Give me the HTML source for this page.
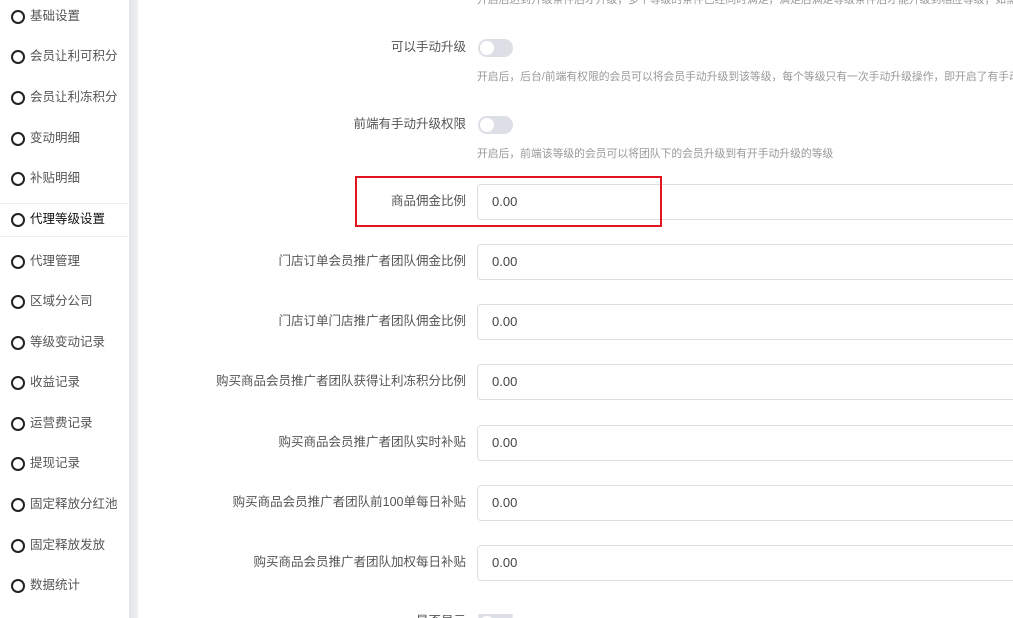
<!DOCTYPE html>
<html style="overflow:hidden;width:1013px;height:618px"><head><meta charset="utf-8"><style>
*{margin:0;padding:0;box-sizing:border-box}
body{width:1013px;height:618px;overflow:hidden;background:#fff;font-family:"Liberation Sans","Noto Sans CJK SC",sans-serif;position:relative}
.sb{position:absolute;left:0;top:0;width:129px;height:618px;background:#fff}
.gap{position:absolute;left:129px;top:0;width:9px;height:618px;background:linear-gradient(to right,#e2e4e8,#eef0f3)}
.it{position:absolute;left:0;width:129px;height:20px;font-size:12.5px;color:#555;line-height:20px;padding-left:30px;white-space:nowrap;margin-top:1px}
.it:before{content:"";position:absolute;left:11px;top:4px;width:10px;height:10px;border:2px solid #222;border-radius:50%}
.act{color:#111}
.hl{position:absolute;left:0;width:129px;height:1px;background:#ebedf0}
.lab{position:absolute;right:547px;font-size:12.5px;color:#555;white-space:nowrap;line-height:18px}
.inp{position:absolute;left:477px;width:560px;height:36px;border:1px solid #dcdfe6;border-radius:4px;font-size:13px;color:#444;line-height:34px;padding-left:14px}
.tg{position:absolute;left:478px;width:35px;height:18px;border-radius:9px;background:#dcdfe6}
.tg:after{content:"";position:absolute;left:2px;top:2px;width:14px;height:14px;border-radius:50%;background:#fff}
.help{position:absolute;left:477px;font-size:10.8px;color:#999;white-space:nowrap}
.red{position:absolute;left:355px;top:176px;width:307px;height:51px;border:2px solid #e0151f}
</style></head><body>
<div class="sb">
<div class="it" style="top:5px">基础设置</div>
<div class="it" style="top:45px">会员让利可积分</div>
<div class="it" style="top:86px">会员让利冻积分</div>
<div class="it" style="top:127px">变动明细</div>
<div class="it" style="top:167px">补贴明细</div>
<div class="hl" style="top:203px"></div>
<div class="it act" style="top:208px">代理等级设置</div>
<div class="hl" style="top:236px"></div>
<div class="it" style="top:250px">代理管理</div>
<div class="it" style="top:290px">区域分公司</div>
<div class="it" style="top:331px">等级变动记录</div>
<div class="it" style="top:371px">收益记录</div>
<div class="it" style="top:412px">运营费记录</div>
<div class="it" style="top:452px">提现记录</div>
<div class="it" style="top:493px">固定释放分红池</div>
<div class="it" style="top:534px">固定释放发放</div>
<div class="it" style="top:574px">数据统计</div>
</div>
<div class="gap"></div>
<div class="help" style="top:-9px">开启后达到升级条件后才升级，多个等级的条件已经同时满足，满足后满足等级条件后才能升级到相应等级，如需</div>
<div class="lab" style="top:38px">可以手动升级</div><div class="tg" style="top:39px"></div>
<div class="help" style="top:68px">开启后，后台/前端有权限的会员可以将会员手动升级到该等级，每个等级只有一次手动升级操作，即开启了有手动</div>
<div class="lab" style="top:115px">前端有手动升级权限</div><div class="tg" style="top:116px"></div>
<div class="help" style="top:145px">开启后，前端该等级的会员可以将团队下的会员升级到有开手动升级的等级</div>
<div class="lab" style="top:192px">商品佣金比例</div><div class="inp" style="top:184px">0.00</div>
<div class="lab" style="top:252px">门店订单会员推广者团队佣金比例</div><div class="inp" style="top:244px">0.00</div>
<div class="lab" style="top:312px">门店订单门店推广者团队佣金比例</div><div class="inp" style="top:304px">0.00</div>
<div class="lab" style="top:372px">购买商品会员推广者团队获得让利冻积分比例</div><div class="inp" style="top:364px">0.00</div>
<div class="lab" style="top:433px">购买商品会员推广者团队实时补贴</div><div class="inp" style="top:425px">0.00</div>
<div class="lab" style="top:493px">购买商品会员推广者团队前100单每日补贴</div><div class="inp" style="top:485px">0.00</div>
<div class="lab" style="top:553px">购买商品会员推广者团队加权每日补贴</div><div class="inp" style="top:545px">0.00</div>
<div class="lab" style="top:612px">是否显示</div><div class="tg" style="top:614px;height:4px"></div>
<div class="red"></div>
</body></html>
